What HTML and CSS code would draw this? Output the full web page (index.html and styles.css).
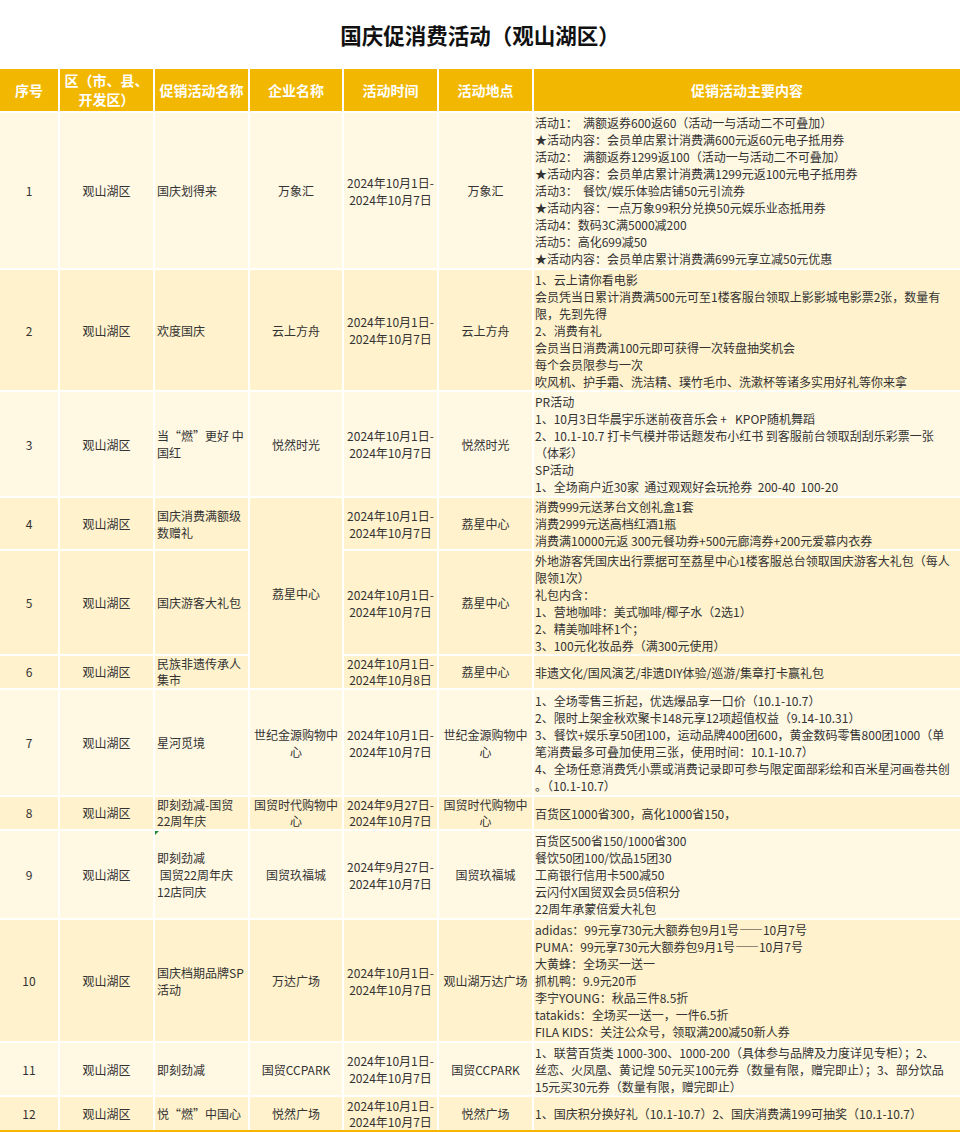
FILE: index.html
```html
<!DOCTYPE html>
<html lang="zh-CN">
<head>
<meta charset="utf-8">
<title>国庆促消费活动（观山湖区）</title>
<link rel="stylesheet" href="styles.css">
</head>
<body>
<h1 class="title">国庆促消费活动（观山湖区）</h1>
<table class="sheet">
  <colgroup>
    <col class="c-no"><col class="c-area"><col class="c-name"><col class="c-firm"><col class="c-time"><col class="c-place"><col class="c-body">
  </colgroup>
  <thead>
    <tr class="head">
      <th>序号</th>
      <th>区（市、县、<br>开发区）</th>
      <th>促销活动名称</th>
      <th>企业名称</th>
      <th>活动时间</th>
      <th>活动地点</th>
      <th>促销活动主要内容</th>
    </tr>
  </thead>
  <tbody>
    <tr class="light r1">
      <td class="ctr">1</td>
      <td class="ctr">观山湖区</td>
      <td class="nm">国庆划得来</td>
      <td class="ctr">万象汇</td>
      <td class="ctr">2024年10月1日-<br>2024年10月7日</td>
      <td class="ctr">万象汇</td>
      <td class="txt">活动1：&nbsp; 满额返券600返60（活动一与活动二不可叠加）<br>★活动内容：会员单店累计消费满600元返60元电子抵用券<br>活动2：&nbsp; 满额返券1299返100（活动一与活动二不可叠加）<br>★活动内容：会员单店累计消费满1299元返100元电子抵用券<br>活动3：&nbsp; 餐饮/娱乐体验店铺50元引流券<br>★活动内容：一点万象99积分兑换50元娱乐业态抵用券<br>活动4：数码3C满5000减200<br>活动5：高化699减50<br>★活动内容：会员单店累计消费满699元享立减50元优惠</td>
    </tr>
    <tr class="dark r2">
      <td class="ctr">2</td>
      <td class="ctr">观山湖区</td>
      <td class="nm">欢度国庆</td>
      <td class="ctr">云上方舟</td>
      <td class="ctr">2024年10月1日-<br>2024年10月7日</td>
      <td class="ctr">云上方舟</td>
      <td class="txt">1、云上请你看电影<br>会员凭当日累计消费满500元可至1楼客服台领取上影影城电影票2张，数量有<br>限，先到先得<br>2、消费有礼<br>会员当日消费满100元即可获得一次转盘抽奖机会<br>每个会员限参与一次<br>吹风机、护手霜、洗洁精、璞竹毛巾、洗漱杯等诸多实用好礼等你来拿</td>
    </tr>
    <tr class="light r3">
      <td class="ctr">3</td>
      <td class="ctr">观山湖区</td>
      <td class="nm">当“燃”更好 中<br>国红</td>
      <td class="ctr">悦然时光</td>
      <td class="ctr">2024年10月1日-<br>2024年10月7日</td>
      <td class="ctr">悦然时光</td>
      <td class="txt">PR活动<br>1、10月3日华晨宇乐迷前夜音乐会 +&nbsp;&nbsp; KPOP随机舞蹈<br>2、10.1-10.7 打卡气模并带话题发布小红书 到客服前台领取刮刮乐彩票一张<br>（体彩）<br>SP活动<br>1、全场商户近30家&nbsp; 通过观观好会玩抢券&nbsp; 200-40&nbsp; 100-20</td>
    </tr>
    <tr class="dark r4">
      <td class="ctr">4</td>
      <td class="ctr">观山湖区</td>
      <td class="nm">国庆消费满额级<br>数赠礼</td>
      <td class="ctr" rowspan="3">荔星中心</td>
      <td class="ctr">2024年10月1日-<br>2024年10月7日</td>
      <td class="ctr">荔星中心</td>
      <td class="txt">消费999元送茅台文创礼盒1套<br>消费2999元送高档红酒1瓶<br>消费满10000元返 300元餐功券+500元廊湾券+200元爱慕内衣券</td>
    </tr>
    <tr class="dark r5">
      <td class="ctr">5</td>
      <td class="ctr">观山湖区</td>
      <td class="nm">国庆游客大礼包</td>
      <td class="ctr">2024年10月1日-<br>2024年10月7日</td>
      <td class="ctr">荔星中心</td>
      <td class="txt">外地游客凭国庆出行票据可至荔星中心1楼客服总台领取国庆游客大礼包（每人<br>限领1次）<br>礼包内含：<br>1、营地咖啡：美式咖啡/椰子水（2选1）<br>2、精美咖啡杯1个；<br>3、100元化妆品券（满300元使用）</td>
    </tr>
    <tr class="dark r6 short">
      <td class="ctr">6</td>
      <td class="ctr">观山湖区</td>
      <td class="nm">民族非遗传承人<br>集市</td>
      <td class="ctr">2024年10月1日-<br>2024年10月8日</td>
      <td class="ctr">荔星中心</td>
      <td class="txt">非遗文化/国风演艺/非遗DIY体验/巡游/集章打卡赢礼包</td>
    </tr>
    <tr class="light r7">
      <td class="ctr">7</td>
      <td class="ctr">观山湖区</td>
      <td class="nm">星河觅境</td>
      <td class="ctr">世纪金源购物中<br>心</td>
      <td class="ctr">2024年10月1日-<br>2024年10月7日</td>
      <td class="ctr">世纪金源购物中<br>心</td>
      <td class="txt">1、全场零售三折起，优选爆品享一口价（10.1-10.7）<br>2、限时上架金秋欢聚卡148元享12项超值权益（9.14-10.31）<br>3、餐饮+娱乐享50团100，运动品牌400团600，黄金数码零售800团1000（单<br>笔消费最多可叠加使用三张，使用时间：10.1-10.7）<br>4、全场任意消费凭小票或消费记录即可参与限定面部彩绘和百米星河画卷共创<br>。（10.1-10.7）</td>
    </tr>
    <tr class="dark r8 short">
      <td class="ctr">8</td>
      <td class="ctr">观山湖区</td>
      <td class="nm">即刻劲减-国贸<br>22周年庆</td>
      <td class="ctr">国贸时代购物中<br>心</td>
      <td class="ctr">2024年9月27日-<br>2024年10月7日</td>
      <td class="ctr">国贸时代购物中<br>心</td>
      <td class="txt">百货区1000省300，高化1000省150，</td>
    </tr>
    <tr class="light r9">
      <td class="ctr">9</td>
      <td class="ctr">观山湖区</td>
      <td class="nm flag">即刻劲减<br>&nbsp;国贸22周年庆<br>12店同庆</td>
      <td class="ctr">国贸玖福城</td>
      <td class="ctr">2024年9月27日-<br>2024年10月7日</td>
      <td class="ctr">国贸玖福城</td>
      <td class="txt">百货区500省150/1000省300<br>餐饮50团100/饮品15团30<br>工商银行信用卡500减50<br>云闪付X国贸双会员5倍积分<br>22周年承蒙倍爱大礼包</td>
    </tr>
    <tr class="dark r10">
      <td class="ctr">10</td>
      <td class="ctr">观山湖区</td>
      <td class="nm">国庆档期品牌SP<br>活动</td>
      <td class="ctr">万达广场</td>
      <td class="ctr">2024年10月1日-<br>2024年10月7日</td>
      <td class="ctr">观山湖万达广场</td>
      <td class="txt">adidas：99元享730元大额券包9月1号——10月7号<br>PUMA：99元享730元大额券包9月1号——10月7号<br>大黄蜂：全场买一送一<br>抓机鸭：9.9元20币<br>李宁YOUNG：秋品三件8.5折<br>tatakids：全场买一送一，一件6.5折<br>FILA KIDS：关注公众号，领取满200减50新人券</td>
    </tr>
    <tr class="light r11">
      <td class="ctr">11</td>
      <td class="ctr">观山湖区</td>
      <td class="nm">即刻劲减</td>
      <td class="ctr">国贸CCPARK</td>
      <td class="ctr">2024年10月1日-<br>2024年10月7日</td>
      <td class="ctr">国贸CCPARK</td>
      <td class="txt">1、联营百货类 1000-300、1000-200（具体参与品牌及力度详见专柜）；2、<br>丝恋、火凤凰、黄记煌 50元买100元券（数量有限，赠完即止）；3、部分饮品<br>15元买30元券（数量有限，赠完即止）</td>
    </tr>
    <tr class="dark r12 short">
      <td class="ctr">12</td>
      <td class="ctr">观山湖区</td>
      <td class="nm">悦“燃”中国心</td>
      <td class="ctr">悦然广场</td>
      <td class="ctr">2024年10月1日-<br>2024年10月7日</td>
      <td class="ctr">悦然广场</td>
      <td class="txt">1、国庆积分换好礼（10.1-10.7）2、国庆消费满199可抽奖（10.1-10.7）</td>
    </tr>
  </tbody>
</table>
</body>
</html>
```
FILE: styles.css
```css
html, body {
  margin: 0;
  padding: 0;
  background: #ffffff;
}

body {
  width: 960px;
  font-family: "Noto Sans CJK SC", "Microsoft YaHei", sans-serif;
  color: #333333;
  overflow: hidden;
}

.title {
  margin: 0;
  height: 69px;
  display: flex;
  align-items: center;
  justify-content: center;
  font-size: 21.5px;
  font-weight: 700;
  color: #111111;
}

.sheet {
  width: 960px;
  table-layout: fixed;
  border-collapse: separate;
  border-spacing: 0;
  font-size: 12px;
  line-height: 17px;
  border-bottom: 2px solid #f2b700;
}

.c-no { width: 58px; }
.c-area { width: 95px; }
.c-name { width: 95px; }
.c-firm { width: 94px; }
.c-time { width: 95px; }
.c-place { width: 95px; }
.c-body { width: 428px; }

.head th {
  height: 42px;
  padding: 0;
  background: #f2b700;
  color: #ffffff;
  font-size: 14px;
  font-weight: 700;
  line-height: 19px;
  text-align: center;
  vertical-align: middle;
  border-left: 2px solid #ffffff;
}

.head th:first-child {
  border-left: none;
}

.sheet td {
  padding: 0;
  vertical-align: middle;
  border-top: 2px solid #ffffff;
  border-left: 2px solid #ffffff;
}

.sheet td:first-child {
  border-left: none;
}

.light td { background: #fff8e3; }
.dark td { background: #fff2cc; }

.ctr {
  text-align: center;
}

.nm {
  text-align: left;
  padding-left: 2px !important;
}

.txt {
  text-align: left;
  padding-left: 1px !important;
  white-space: nowrap;
}

.short .ctr,
.short .nm {
  line-height: 16px;
}

.flag {
  position: relative;
}

.flag::before {
  content: "";
  position: absolute;
  left: 0;
  top: 0;
  width: 0;
  height: 0;
  border-top: 4px solid #1e8a3a;
  border-right: 4px solid transparent;
}

.r1 { height: 157px; }
.r2 { height: 122px; }
.r3 { height: 106px; }
.r4 { height: 53px; }
.r5 { height: 105px; }
.r6 { height: 34px; }
.r7 { height: 107px; }
.r8 { height: 34px; }
.r9 { height: 89px; }
.r10 { height: 123px; }
.r11 { height: 54px; }
.r12 { height: 35px; }
```
